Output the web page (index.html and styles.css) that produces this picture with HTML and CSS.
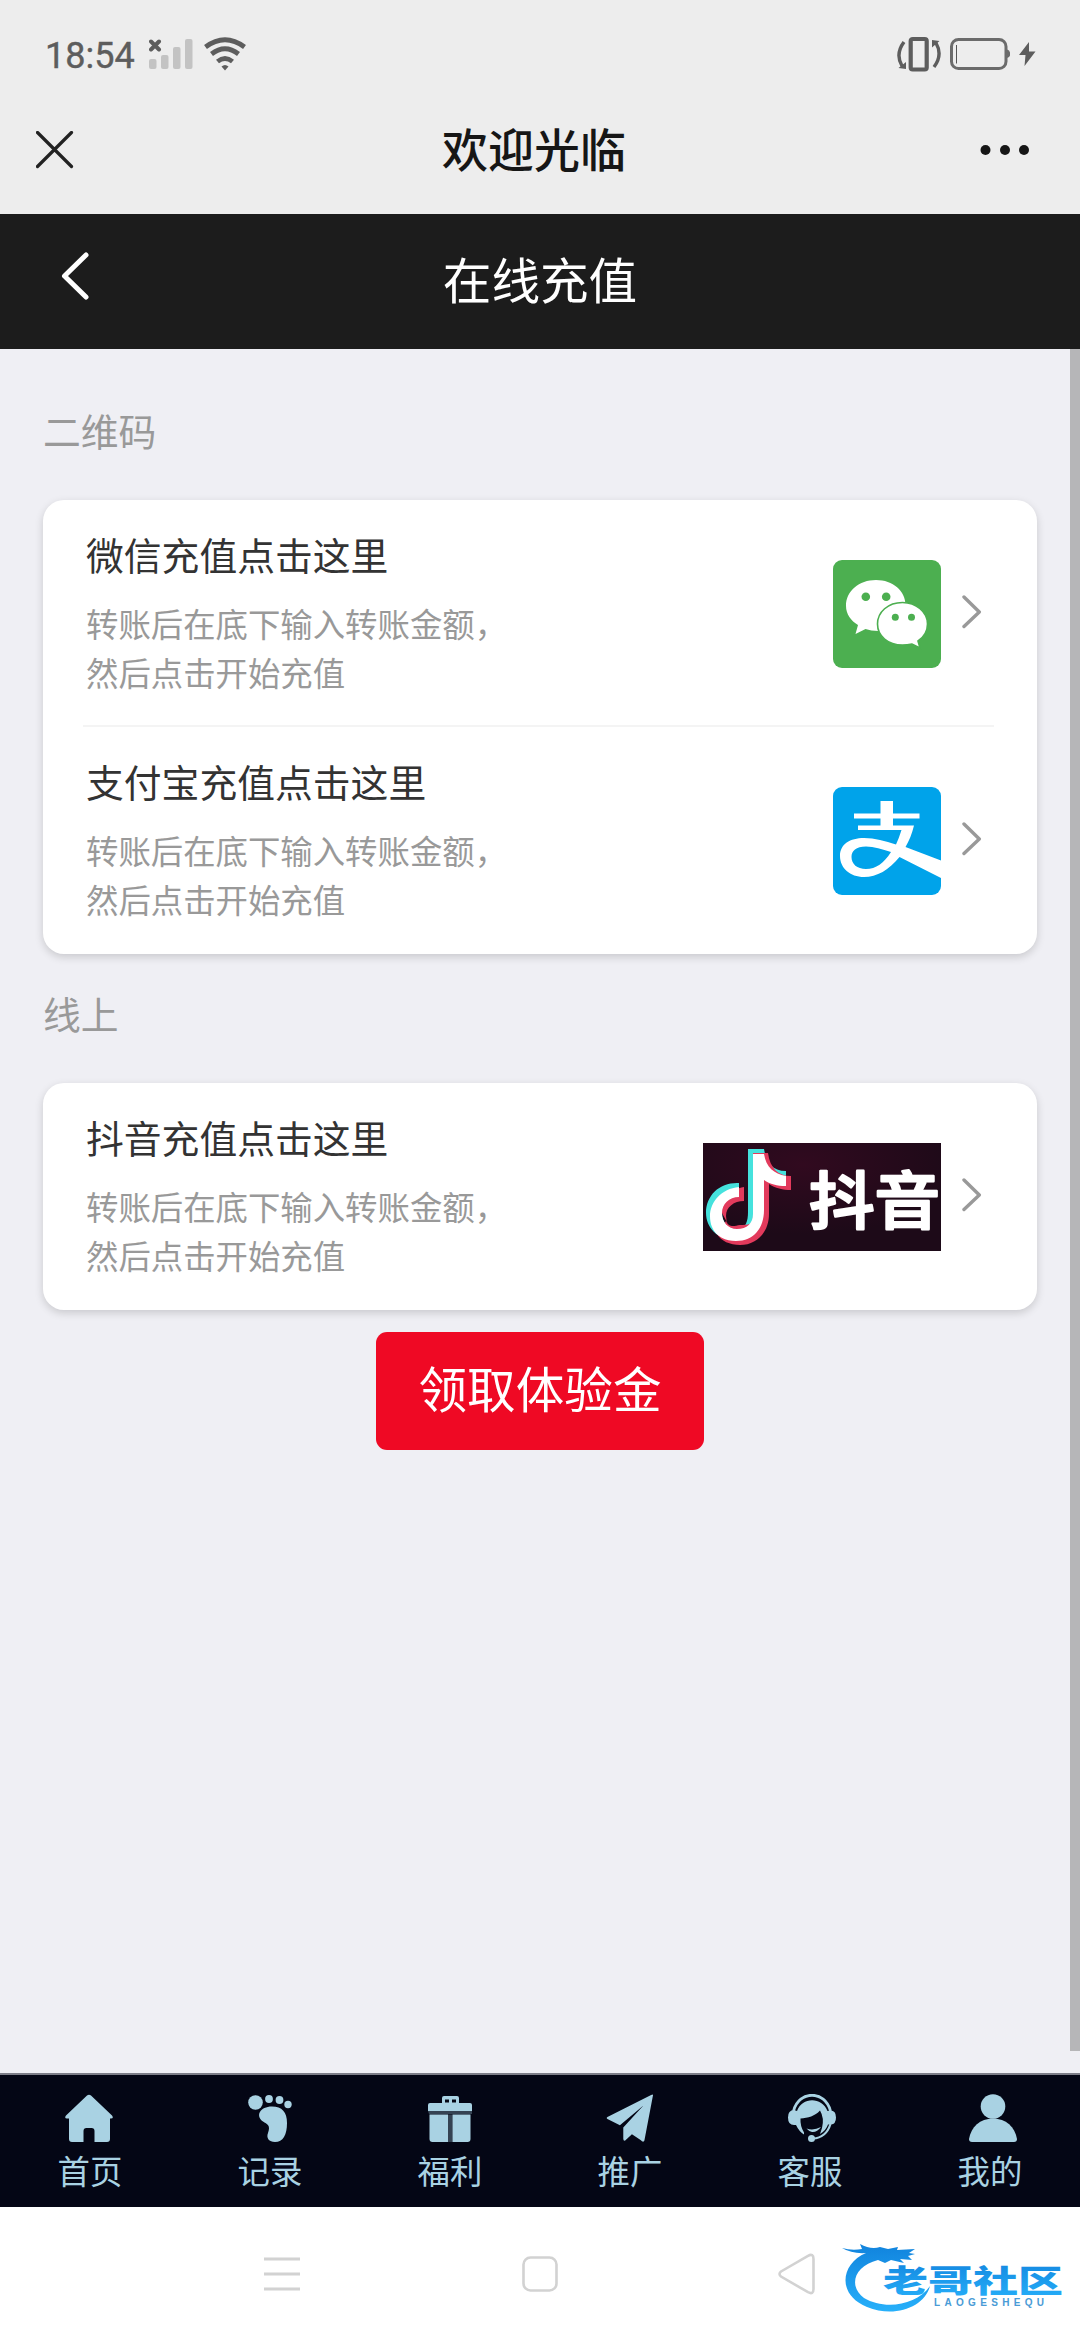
FILE: index.html
```html
<!DOCTYPE html>
<html lang="zh-CN">
<head>
<meta charset="utf-8">
<title>在线充值</title>
<link rel="stylesheet" href="styles.css">
</head>
<body>
<div class="screen">
  <div class="status">
    <span class="time">18:54</span>
    <svg class="signal" width="44" height="34" viewBox="0 0 44 34">
      <g fill="#c3c3c3"><rect x="0" y="22" width="7.5" height="10" rx="2"/><rect x="12" y="18" width="7.5" height="14" rx="2"/><rect x="24" y="10" width="7.5" height="22" rx="2"/><rect x="36" y="2" width="7.5" height="30" rx="2"/></g>
      <path d="M2 4.500L10 12.500M10 4.500L2 12.500" stroke="#5d5d5d" stroke-width="4" stroke-linecap="round"/>
    </svg>
    <svg class="wifi" width="42" height="34" viewBox="0 0 42 34">
      <g fill="none" stroke="#5d5d5d" stroke-width="4.800"><path d="M1.500 10Q21-4.500 40.500 10"/><path d="M7.500 17Q21 6.500 34.500 17"/><path d="M13.500 24.500Q21 18.500 28.500 24.500"/></g>
      <path d="M17.500 29.500Q21 26.500 24.500 29.500L21 33.500Z" fill="#5d5d5d"/>
    </svg>
    <span class="grow"></span>
    <svg width="44" height="36" viewBox="0 0 44 36">
      <rect x="13.700" y="3" width="16" height="30.500" rx="2" fill="none" stroke="#5d5d5d" stroke-width="4.200"/>
      <g fill="none" stroke="#5d5d5d" stroke-width="3.400"><path d="M7 6Q-2 18 5 30"/><path d="M37 31Q46 19 39 7"/></g>
      <path d="M1.500 32L9 26V33ZM35 4L42.500 5L35 11.500Z" fill="#5d5d5d"/>
    </svg>
    <svg class="battery" width="60" height="34" viewBox="0 0 60 34">
      <rect x="1.500" y="2.500" width="54.500" height="29" rx="7" fill="none" stroke="#6b6b6b" stroke-width="3"/>
      <path d="M57 12.500Q60.500 13.500 60 17Q60.500 20 57 21Z" fill="#6b6b6b"/><path d="M6.500 8V26.500" stroke="#555"/>
    </svg>
    <svg class="bolt" width="17" height="24" viewBox="0 0 17 24"><path d="M10 0L0 13H6.500L5.500 24L16.500 9.500H10Z" fill="#5d5d5d"/></svg>
  </div>
  <div class="wxbar">
    <svg width="38" height="38" viewBox="0 0 38 38"><path d="M1.500 1.500L35.500 35.500M35.500 1.500L1.500 35.500" stroke="#222" stroke-width="3.200" stroke-linecap="round"/></svg>
    <h1 class="wxtitle">欢迎光临</h1>
    <svg width="50" height="12" viewBox="0 0 50 12" fill="#161616"><circle cx="5.500" cy="6" r="5"/><circle cx="25" cy="6" r="5"/><circle cx="44" cy="6" r="5"/></svg>
  </div>
  <div class="navbar">
    <svg width="28" height="48" viewBox="0 0 28 48"><path d="M25 3L3.500 24L25 45" fill="none" stroke="#fff" stroke-width="5" stroke-linecap="round" stroke-linejoin="round"/></svg>
    <h2 class="navtitle">在线充值</h2>
  </div>
  <main class="page">
    <div class="content">
      <div class="label">二维码</div>
      <section class="card">
        <div class="row">
          <div class="info"><div class="name">微信充值点击这里</div><div class="desc">转账后在底下输入转账金额，<br>然后点击开始充值</div></div>
          <svg width="108" height="108" viewBox="0 0 108 108">
            <rect width="108" height="108" rx="9" fill="#4caf50"/>
            <path d="M43 20C26 20 13 31 13 46C13 54 18 61 25 65L22.500 74L32.500 69Q38 71 45 71C61 71 72.500 60 72.500 45C72.500 31 60 20 43 20Z" fill="#fff"/>
            <path d="M69.500 42.500C83 42.500 94.500 52 94.500 64C94.500 71 91 77 85 81L87 88L79 84Q74 85 69.500 85C55 85 44.500 76 44.500 64C44.500 52 55 42.500 69.500 42.500Z" fill="#fff" stroke="#4caf50" stroke-width="1.600"/>
            <g fill="#4caf50"><circle cx="32.800" cy="36.700" r="4.300"/><circle cx="53.200" cy="36.700" r="4.300"/><circle cx="62.300" cy="57.200" r="3.500"/><circle cx="78.500" cy="57.200" r="3.500"/></g>
          </svg>
          <svg class="arrow" width="20" height="34" viewBox="0 0 20 34"><path d="M2 2L17.300 17L2 31.500"/></svg>
        </div>
        <div class="row">
          <div class="info"><div class="name">支付宝充值点击这里</div><div class="desc">转账后在底下输入转账金额，<br>然后点击开始充值</div></div>
          <svg width="108" height="108" viewBox="0 0 108 108">
            <rect width="108" height="108" rx="9" fill="#00a3ea"/>
            <path fill="#fff" fill-rule="evenodd" d="M47.500 14H60V26.500H86.500V31.500H60V38.500H81C79 47 76 54 72.500 60L108 73.500V91L66.500 70C56 83 44 90 31 90C17 90 7 81 7 69C7 57 17 51 31 51C42 51 52 54 63 57.500Q66 51 68.500 43H25V38.500H47.500V31.500H21V26.500H47.500ZM58 65C49 62 41 59.500 33 59.500C23 59.500 18.500 64 18.500 70C18.500 77 24 82 33 82C43 82 51 76 58 65Z"/>
          </svg>
          <svg class="arrow" width="20" height="34" viewBox="0 0 20 34"><path d="M2 2L17.300 17L2 31.500"/></svg>
        </div>
      </section>
      <div class="label second">线上</div>
      <section class="card">
        <div class="row">
          <div class="info"><div class="name">抖音充值点击这里</div><div class="desc">转账后在底下输入转账金额，<br>然后点击开始充值</div></div>
          <svg width="238" height="108" viewBox="0 0 238 108">
            <defs><radialGradient id="plum" cx=".42" cy=".2" r=".65"><stop offset="0" stop-color="#310a1f"/><stop offset="1" stop-color="#1d0a18"/></radialGradient></defs>
            <rect width="238" height="108" fill="url(#plum)"/>
            <path fill="#45e2dd" d="M45 6H61C63 20 70 28 83 28V43C75 43 67 41 61 37V66C61 85 50 97 32 97C14 97 3 84 3 70C3 52 17 39 36 40V54C26 54 19 61 19 70C19 80 26 86 34 86C43 86 45 78 45 69Z"/>
            <path fill="#e23a5c" d="M50 10H65C67 25 75 33 88 33V47C80 47 72 45 66 41V71C66 89 54 102 37 102C27 102 18 98 14 91L23 78C26 85 31 83 37 82C45 82 50 82 50 73ZM41 44V58C31 58 23 64 23 73Q23 78 25 81L19 70C18 60 26 46 41 44Z"/>
            <path fill="#fff" d="M50 11H61C63 24 71 31 83 33V43C74 43 67 41 61 37V67C61 85 51 98 33 98C23 98 13 94 9 84C2 66 14 46 36 44V54C26 54 19 61 19 70C19 79 25 86 34 86C44 86 50 80 50 71Z"/>
            <text class="dy" x="106" y="81" textLength="131" lengthAdjust="spacingAndGlyphs">抖音</text>
          </svg>
          <svg class="arrow" width="20" height="34" viewBox="0 0 20 34"><path d="M2 2L17.300 17L2 31.500"/></svg>
        </div>
      </section>
      <button class="claim">领取体验金</button>
    </div>
    <div class="scrollbar"></div>
  </main>
  <nav class="tabs">
    <a class="tab home"><svg width="48" height="48" viewBox="0 0 48 48"><path d="M22 1.500Q24 0 26 1.500L47 21.500Q49 24.500 46 24.500H45V45Q45 48 42 48H29.500V37Q29.500 34 26.500 34H21.500Q18.500 34 18.500 37V48H7Q4 48 4 45V24.500H2Q-1 24.500 1 21.500Z"/></svg><span>首页</span></a>
    <a class="tab"><svg width="48" height="48" viewBox="0 0 48 48"><circle cx="9.500" cy="8.500" r="7.300"/><circle cx="23" cy="5" r="3.900"/><circle cx="33.500" cy="6" r="3.900"/><circle cx="42" cy="10.500" r="3.700"/><path d="M26 12.500C36 12.500 41 18 41 29C41 41 37 48 29 48C23 48 20 44 22 39C25 31 21 30 17 27.500C9 22 14 12.500 26 12.500Z"/></svg><span>记录</span></a>
    <a class="tab"><svg width="48" height="48" viewBox="0 0 48 48"><path d="M16 9V4Q16 2 18 2H31Q33 2 33 4V9H44Q46 9 46 11V17H2V11Q2 9 4 9Z"/><path d="M3.500 20.500H22V48H6.500Q3.500 48 3.500 45ZM26.500 20.500H44.500V45Q44.500 48 41.500 48H26.500Z"/><path d="M2 17H46V20H3ZM22 20.500H26.500V48H22Z" opacity=".3"/><path d="M19 7H23M26 7H30" stroke="#040615" stroke-width="3"/></svg><span>福利</span></a>
    <a class="tab"><svg width="50" height="50" viewBox="0 0 50 50"><path d="M49 1L40 48.500Q39 51 36 48L27 42L20 48.500Q18 49 18 46.500V35L39 12L14.500 32.500L1.500 26Q0 25 1.500 24L47 1Q49 0 49 1Z"/></svg><span>推广</span></a>
    <a class="tab service"><svg width="48" height="48" viewBox="0 0 48 48">
      <path d="M5.500 17C11-4 37-4 42.500 17" fill="none" stroke="#a9d2e3" stroke-width="2.800"/>
      <path d="M6 16Q0 16 0 23.500Q0 31 6 31H8Q11 37.500 16 40.500V38.500Q12 32 12.500 24.500C20 24 27 22 32 16.500Q36.500 24 34 34L32 40Q38 36.500 40 30.500H43Q48 30 48 23.500Q48 16.500 42.500 16.500L39.500 17C34 2.500 14 2.500 9 17Z"/>
      <path d="M18.500 34.500Q25.500 37 33 33Q29 38.500 24 38Q20.500 37 18.500 34.500Z"/>
      <circle cx="23.500" cy="44.500" r="3.500"/>
      <path d="M25 44.500Q38 44 42.500 30" fill="none" stroke="#a9d2e3" stroke-width="2.200"/></svg><span>客服</span></a>
    <a class="tab mine"><svg width="48" height="48" viewBox="0 0 48 48"><circle cx="24" cy="12.500" r="12.300"/><path d="M24 24.500C37 24.500 46 33 48 45Q48 48 45 48H3Q0 48 0 45C2 33 11 24.500 24 24.500Z"/></svg><span>我的</span></a>
  </nav>
  <div class="system">
    <svg width="36" height="34" viewBox="0 0 36 34"><path d="M0 2H36M0 17H36M0 32H36" stroke="#d2d2d2" stroke-width="3"/></svg>
    <svg width="36" height="36" viewBox="0 0 36 36"><rect x="1.500" y="1.500" width="33" height="33" rx="7" fill="none" stroke="#d2d2d2" stroke-width="2.600"/></svg>
    <svg class="back" width="38" height="42" viewBox="0 0 38 42"><path d="M3 18.500L30 2.800Q35.500 0 35.500 6V36Q35.500 42 30 39.200L3 23.500Q0 21 3 18.500Z" fill="none" stroke="#d2d2d2" stroke-width="2.600"/></svg>
    <svg class="brand" width="226" height="72" viewBox="0 0 226 72">
      <defs><linearGradient id="sky" x1="0" y1="0" x2="0" y2="1"><stop offset="0" stop-color="#1183dd"/><stop offset="1" stop-color="#27b0fa"/></linearGradient></defs>
      <path fill="url(#sky)" d="M0 6Q10 9 20 7L18 2Q29 8 38 5L46 7L56 5L55 8L73 7L67 11L73 12L66 14L70 18L58 17L62 21L49 18L43 21L36 18C12 24 6 44 22 56C42 68 74 64 88 44C82 66 52 76 25 65C-5 53-2 22 24 11Q10 12 0 6Z"/>
      <text class="brandcn" x="41" y="50" textLength="180" lengthAdjust="spacingAndGlyphs">老哥社区</text>
      <text class="branden" x="92" y="64" textLength="110">LAOGESHEQU</text>
    </svg>
  </div>
</div>
</body>
</html>
```
FILE: styles.css
```css
* { box-sizing: border-box; }
body { margin: 0; font-family: "Noto Sans CJK SC", sans-serif; }
svg { display: block; flex: none; }
h1, h2 { margin: 0; }
.screen { width: 1080px; height: 2340px; display: flex; flex-direction: column; overflow: hidden; background: #fff; }
.status { height: 108px; flex: none; background: #ededed; display: flex; align-items: center; padding: 0 44px 0 45px; }
.time { font: 400 36px/40px Roboto, sans-serif; color: #5d5d5d; -webkit-text-stroke: .4px #5d5d5d; width: 104px; padding-top: 3px; }
.wifi { margin-left: 11px; }
.grow { flex: 1; }
.battery { margin-left: 9px; }
.bolt { margin-left: 9px; }
.wxbar { height: 106px; flex: none; background: #ededed; display: flex; align-items: center; justify-content: space-between; padding: 0 50px 22px 36px; }
.wxtitle { font-size: 46px; font-weight: 500; line-height: 60px; color: #161616; padding: 0 0 7px 14px; }
.navbar { height: 135px; flex: none; background: #1c1c1c; display: grid; grid-template-columns: 1fr auto 1fr; align-items: center; padding: 0 61px 11px; }
.navtitle { font-size: 48.6px; font-weight: 400; line-height: 60px; color: #fff; padding-top: 3px; }
.page { flex: 1; min-height: 0; background: #efeff4; display: flex; }
.content { flex: 1; padding: 52px 33px 0 43px; display: flex; flex-direction: column; }
.label { font-size: 37.8px; line-height: 57px; color: #999; }
.card { margin-top: 42px; background: #fff; border-radius: 21px; box-shadow: 0 3px 8px rgba(0,0,0,.16); }
.row { height: 227px; display: flex; align-items: center; padding-right: 55px; position: relative; }
.row + .row::before { content: ""; position: absolute; left: 40px; right: 43px; top: -2px; height: 2px; background: #f4f4f4; }
.info { flex: 1; padding: 0 0 4px 43px; }
.name { font-size: 37.8px; line-height: 56px; color: #333; }
.desc { font-size: 32.4px; line-height: 48.6px; color: #999; margin-top: 17px; }
.arrow { margin: -3px 0 0 21px; fill: none; stroke: #999; stroke-width: 3.4; stroke-linecap: round; stroke-linejoin: round; }
.second { margin-top: 30px; }
.dy { font-size: 62px; font-weight: 500; fill: #fff; stroke: #fff; stroke-width: 2.4; stroke-linejoin: round; }
.claim { align-self: center; width: 328px; height: 118px; margin-top: 22px; border: 0; border-radius: 11px; background: #ef0924; color: #fff; font: 48.6px/60px "Noto Sans CJK SC", sans-serif; padding: 0 0 9px; }
.scrollbar { width: 10px; height: 1702px; background: #b6b6b8; }
.tabs { height: 134px; flex: none; background: #040615; border-top: 2px solid #7c7d87; display: grid; grid-template-columns: repeat(6, 1fr); }
.tab { display: flex; flex-direction: column; align-items: center; padding-top: 19px; color: #a9d2e3; font-size: 32.4px; line-height: 48px; }
.tab svg { fill: #a9d2e3; height: 48px; }
.tab span { margin-top: 4px; }
.home svg { margin-right: 3px; }
.service svg { margin-left: 3px; }
.mine svg { margin-left: 6px; }
.system { flex: none; height: 133px; background: #fff; display: flex; align-items: center; padding-left: 264px; gap: 222px; }
.back { margin-left: -2px; }
.brand { margin: 9px 0 0 -196px; }
.brandcn { font-size: 31px; font-weight: 900; fill: url(#sky); }
.branden { font: bold 10px "Liberation Sans", sans-serif; fill: #4a9bd6; }
```
